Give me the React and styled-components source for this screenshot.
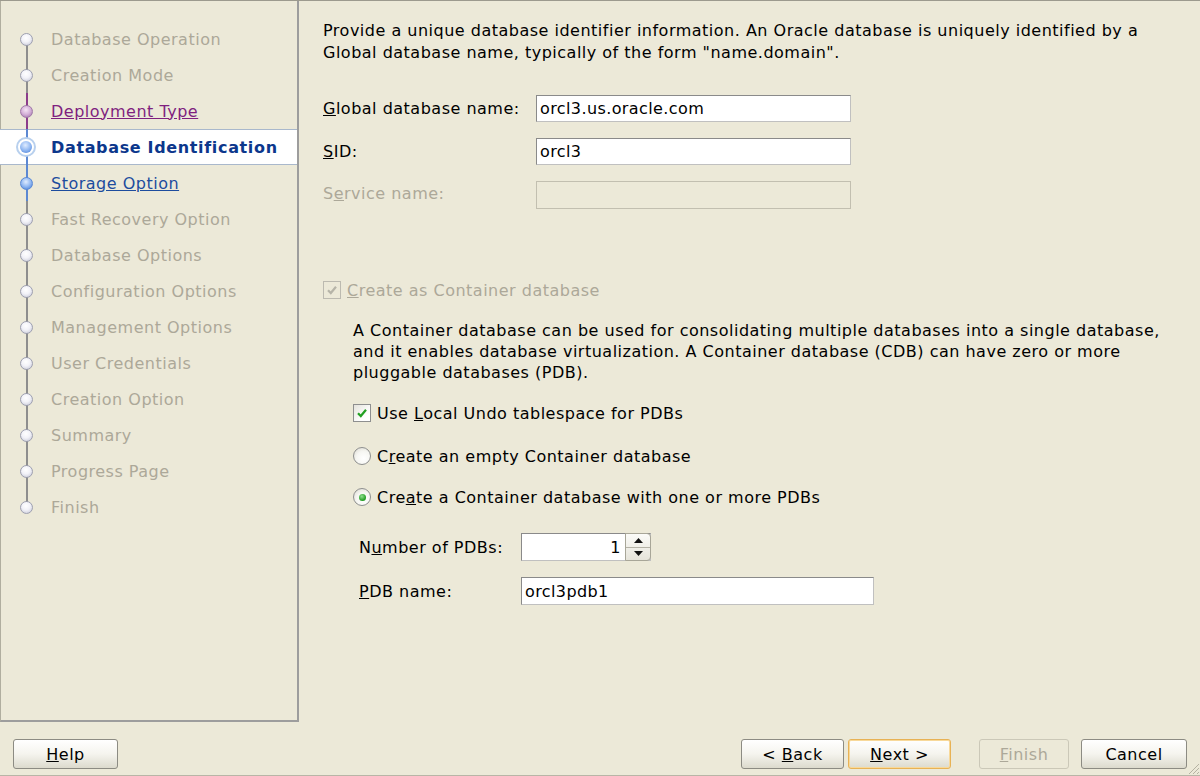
import React from 'react';
import styled, {createGlobalStyle, css} from 'styled-components';

const GlobalStyle = createGlobalStyle`
  html, body {
    margin: 0;
    padding: 0;
    background: #ece9d8;
  }
  body {
    font-family: "DejaVu Sans", "Liberation Sans", sans-serif;
    font-size: 16px;
    letter-spacing: 0.5px;
    color: #000;
  }
`;

const Window = styled.div`
  width: 1200px;
  height: 776px;
  box-sizing: border-box;
  border-top: 1px solid #9c9a8e;
  border-bottom: 1px solid #b8b5a6;
  display: flex;
  flex-direction: column;
  position: relative;
  background: #ece9d8;
`;

const Main = styled.div`
  display: flex;
  flex-direction: row;
  height: 721px;
`;

const StepPanel = styled.div`
  width: 299px;
  box-sizing: border-box;
  border-left: 1px solid #b0ae9f;
  border-right: 2px solid #9d9d9d;
  border-bottom: 2px solid #9d9d9d;
  padding-top: 20px;
  display: flex;
  flex-direction: column;
`;

const lineColors = {
  gray: '#8e8e8e',
  purple: '#8b3d8b',
  blue: '#5c88d2',
};

const StepRow = styled.div`
  height: 36px;
  box-sizing: border-box;
  display: flex;
  flex-direction: row;
  align-items: center;
  position: relative;
  ${props => props.current && css`
    background: #fff;
    border-top: 1px solid #a9b8cc;
    border-bottom: 1px solid #a9b8cc;
    margin-left: -1px;
  `}
  &::before, &::after {
    content: '';
    position: absolute;
    left: ${props => props.current ? 26 : 25}px;
    width: 2px;
    height: 50%;
  }
  &::before {
    top: ${props => props.current ? -1 : 0}px;
    background: ${props => props.first ? 'transparent' : lineColors[props.tone]};
  }
  &::after {
    bottom: ${props => props.current ? -1 : 0}px;
    background: ${props => props.last ? 'transparent' : lineColors[props.tone]};
  }
`;

const NodeCell = styled.div`
  width: ${props => props.current ? 51 : 50}px;
  display: flex;
  justify-content: center;
  position: relative;
  z-index: 1;
`;

const nodeFills = {
  gray: 'radial-gradient(circle at 45% 35%, #ffffff 0%, #f2f2f8 45%, #c0c2d2 100%)',
  purple: 'radial-gradient(circle at 45% 35%, #f4e4f4 0%, #d4b0d8 50%, #9a6aa4 100%)',
  blue: 'radial-gradient(circle at 45% 35%, #e0ecff 0%, #93b9f2 50%, #3f78d4 100%)',
};

const Node = styled.div`
  width: 13px;
  height: 13px;
  border-radius: 50%;
  box-sizing: border-box;
  background: ${props => nodeFills[props.tone]};
  border: 1px solid ${props => props.tone === 'gray' ? '#9ea0b0' : props.tone === 'purple' ? '#a07aa8' : '#5b8ad6'};
`;

const CurrentNode = styled.div`
  width: 20px;
  height: 20px;
  border-radius: 50%;
  box-sizing: border-box;
  border: 2px solid #b8d0ee;
  background: #fff;
  display: flex;
  align-items: center;
  justify-content: center;
  &::after {
    content: '';
    width: 12px;
    height: 12px;
    border-radius: 50%;
    background: ${nodeFills.blue};
  }
`;

const stepText = {
  gray: css`color: #aca899;`,
  visited: css`color: #7f1f7f; text-decoration: underline;`,
  link: css`color: #1d4c9e; text-decoration: underline;`,
  current: css`color: #0c378c; font-weight: bold; letter-spacing: 0.65px;`,
};

const StepLabel = styled.span`
  white-space: nowrap;
  ${props => stepText[props.kind]}
`;

const Content = styled.div`
  flex: 1;
  padding: 19px 20px 0 24px;
  display: flex;
  flex-direction: column;
`;

const Intro = styled.p`
  margin: 0;
  line-height: 22px;
`;

const FormGrid = styled.div`
  display: grid;
  grid-template-columns: 213px 315px;
  row-gap: 16px;
  align-items: center;
  margin-top: 31px;
`;

const Label = styled.label`
  color: ${props => props.disabled ? '#aca899' : '#000'};
  white-space: nowrap;
  margin-top: ${props => props.lift ? -4 : 0}px;
`;

const TextBox = styled.div`
  height: ${props => props.tall ? 28 : 27}px;
  box-sizing: border-box;
  border: 1px solid;
  border-color: ${props => props.disabled ? '#c2bfb0' : '#8a8a8a #c0c0c0 #c0c0c0 #8a8a8a'};
  background: ${props => props.disabled ? '#ece9d8' : '#fff'};
  display: flex;
  align-items: center;
  padding: 0 3px;
  letter-spacing: 0.4px;
  width: ${props => props.width ? props.width + 'px' : 'auto'};
`;

const CheckRow = styled.div`
  display: flex;
  flex-direction: row;
  align-items: center;
  height: 20px;
  gap: 6px;
  margin-top: ${props => props.top}px;
  color: ${props => props.disabled ? '#aca899' : '#000'};
`;

const CheckBox = styled.span`
  width: 18px;
  height: 18px;
  box-sizing: border-box;
  border: 1px solid ${props => props.disabled ? '#bcbab0' : '#8e8f8f'};
  background: ${props => props.disabled ? '#ece9d8' : 'linear-gradient(135deg, #e4e3dc, #ffffff 70%)'};
  display: flex;
  align-items: center;
  justify-content: center;
`;

const Radio = styled.span`
  width: 18px;
  height: 18px;
  box-sizing: border-box;
  border-radius: 50%;
  border: 1px solid #8e8f8f;
  background: radial-gradient(circle at 60% 65%, #ffffff 0%, #f6f6f2 50%, #d8d6cc 100%);
  display: flex;
  align-items: center;
  justify-content: center;
  &::after {
    content: '';
    display: ${props => props.checked ? 'block' : 'none'};
    width: 7px;
    height: 7px;
    border-radius: 50%;
    background: radial-gradient(circle at 40% 35%, #8ee08e, #1f9a1f 70%);
  }
`;

const Indented = styled.div`
  padding-left: 30px;
  display: flex;
  flex-direction: column;
`;

const Para = styled.p`
  margin: 20px 0 0 0;
  line-height: 21px;
`;

const PdbGrid = styled.div`
  display: grid;
  grid-template-columns: 162px auto;
  row-gap: 16px;
  align-items: center;
  margin-top: 26px;
  padding-left: 6px;
`;

const Spinner = styled.div`
  width: 130px;
  height: 28px;
  box-sizing: border-box;
  border: 1px solid;
  border-color: #8a8a8a #c0c0c0 #c0c0c0 #8a8a8a;
  background: #fff;
  display: flex;
  flex-direction: row;
`;

const SpinValue = styled.div`
  flex: 1;
  display: flex;
  align-items: center;
  justify-content: flex-end;
  padding-right: 4px;
`;

const SpinButtons = styled.div`
  width: 24px;
  display: flex;
  flex-direction: column;
  border: 1px solid #a8a698;
  border-radius: 0 4px 4px 0;
  margin: -1px -1px -1px 0;
  background: linear-gradient(#fbfbf8, #e6e4da);
`;

const SpinButton = styled.div`
  flex: 1;
  display: flex;
  align-items: center;
  justify-content: center;
  border-bottom: ${props => props.up ? '1px solid #b4b2a6' : 'none'};
`;

const Footer = styled.div`
  flex: 1;
  display: flex;
  flex-direction: row;
  align-items: flex-start;
  padding: 17px 13px 0 13px;
`;

const Spacer = styled.div`
  flex: 1;
`;

const Button = styled.button`
  font-family: inherit;
  font-size: 16px;
  letter-spacing: 0.5px;
  height: 30px;
  width: ${props => props.w}px;
  margin-left: ${props => props.ml || 0}px;
  box-sizing: border-box;
  border-radius: 3px;
  border: 1px solid ${props => props.disabled ? '#cbc8b8' : '#8c8b83'};
  background: ${props => props.disabled ? '#ece9d8' : 'linear-gradient(#ffffff 0%, #f5f4ee 50%, #dcdacd 100%)'};
  color: ${props => props.disabled ? '#aca899' : '#000'};
  padding: 0;
  display: flex;
  align-items: center;
  justify-content: center;
  ${props => props.focused && css`
    border-color: #e8b255;
    box-shadow: inset 0 0 0 1px #f8d99a;
  `}
`;

const Grip = styled.svg`
  position: absolute;
  right: 0;
  bottom: 0;
`;

const CheckMark = ({color}) => (
  <svg width="12" height="12" viewBox="0 0 12 12">
    <path d="M2 6.2 L4.8 9 L10 2.8" fill="none" stroke={color} strokeWidth="2.2" />
  </svg>
);

const steps = [
  {label: 'Database Operation', tone: 'gray', kind: 'gray'},
  {label: 'Creation Mode', tone: 'gray', kind: 'gray'},
  {label: 'Deployment Type', tone: 'purple', kind: 'visited'},
  {label: 'Database Identification', tone: 'blue', kind: 'current'},
  {label: 'Storage Option', tone: 'blue', kind: 'link'},
  {label: 'Fast Recovery Option', tone: 'gray', kind: 'gray'},
  {label: 'Database Options', tone: 'gray', kind: 'gray'},
  {label: 'Configuration Options', tone: 'gray', kind: 'gray'},
  {label: 'Management Options', tone: 'gray', kind: 'gray'},
  {label: 'User Credentials', tone: 'gray', kind: 'gray'},
  {label: 'Creation Option', tone: 'gray', kind: 'gray'},
  {label: 'Summary', tone: 'gray', kind: 'gray'},
  {label: 'Progress Page', tone: 'gray', kind: 'gray'},
  {label: 'Finish', tone: 'gray', kind: 'gray'},
];

export default function App() {
  const stepList = steps.map((step, i) => {
    const current = step.kind === 'current';
    return (
      <StepRow key={step.label} tone={step.tone} current={current} first={i === 0} last={i === steps.length - 1}>
        <NodeCell current={current}>
          {current ? <CurrentNode /> : <Node tone={step.tone} />}
        </NodeCell>
        <StepLabel kind={step.kind}>{step.label}</StepLabel>
      </StepRow>
    );
  });

  return (
    <Window>
      <GlobalStyle />
      <Main>
        <StepPanel>
          {stepList}
        </StepPanel>
        <Content>
          <Intro>
            Provide a unique database identifier information. An Oracle database is uniquely identified by a<br />
            Global database name, typically of the form "name.domain".
          </Intro>
          <FormGrid>
            <Label><u>G</u>lobal database name:</Label>
            <TextBox>orcl3.us.oracle.com</TextBox>
            <Label><u>S</u>ID:</Label>
            <TextBox>orcl3</TextBox>
            <Label disabled lift>S<u>e</u>rvice name:</Label>
            <TextBox disabled tall />
          </FormGrid>

          <CheckRow top={71} disabled>
            <CheckBox disabled><CheckMark color="#b6b4a8" /></CheckBox>
            <span><u>C</u>reate as Container database</span>
          </CheckRow>

          <Indented>
            <Para>
              A Container database can be used for consolidating multiple databases into a single database,<br />
              and it enables database virtualization. A Container database (CDB) can have zero or more<br />
              pluggable databases (PDB).
            </Para>
            <CheckRow top={20}>
              <CheckBox><CheckMark color="#22a022" /></CheckBox>
              <span>Use <u>L</u>ocal Undo tablespace for PDBs</span>
            </CheckRow>
            <CheckRow top={23}>
              <Radio />
              <span>C<u>r</u>eate an empty Container database</span>
            </CheckRow>
            <CheckRow top={21}>
              <Radio checked />
              <span>Cre<u>a</u>te a Container database with one or more PDBs</span>
            </CheckRow>
            <PdbGrid>
              <Label>N<u>u</u>mber of PDBs:</Label>
              <Spinner>
                <SpinValue>1</SpinValue>
                <SpinButtons>
                  <SpinButton up>
                    <svg width="9" height="5" viewBox="0 0 9 5"><path d="M0 5 L4.5 0 L9 5 Z" fill="#111" /></svg>
                  </SpinButton>
                  <SpinButton>
                    <svg width="9" height="5" viewBox="0 0 9 5"><path d="M0 0 L4.5 5 L9 0 Z" fill="#111" /></svg>
                  </SpinButton>
                </SpinButtons>
              </Spinner>
              <Label><u>P</u>DB name:</Label>
              <TextBox tall width={353}>orcl3pdb1</TextBox>
            </PdbGrid>
          </Indented>
        </Content>
      </Main>
      <Footer>
        <Button w={105}><span><u>H</u>elp</span></Button>
        <Spacer />
        <Button w={103}><span>&lt; <u>B</u>ack</span></Button>
        <Button w={103} ml={4} focused><span><u>N</u>ext &gt;</span></Button>
        <Button w={90} ml={28} disabled><span><u>F</u>inish</span></Button>
        <Button w={106} ml={12}><span>Cancel</span></Button>
      </Footer>
      <Grip width="14" height="14" viewBox="0 0 14 14">
        <path d="M13 3 L3 13 M13 7 L7 13 M13 11 L11 13" stroke="#b5b2a2" strokeWidth="1" />
      </Grip>
    </Window>
  );
}
